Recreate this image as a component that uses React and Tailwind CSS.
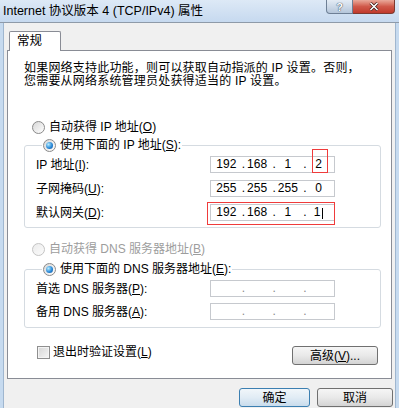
import React from 'react';

const FONT = "font-['Liberation_Sans','Noto_Sans_CJK_SC',sans-serif]";

function Radio({ checked, disabled }) {
  return (
    <span
      className={`inline-flex h-[13px] w-[13px] shrink-0 items-center justify-center rounded-full border bg-linear-to-br ${
        disabled ? 'border-[#c4c4c4] from-[#ececec] to-[#fbfbfb]' : 'border-[#8a8a8a] from-[#d8d8d8] to-[#ffffff]'
      }`}
    >
      {checked && (
        <span className="h-[7px] w-[7px] rounded-full bg-[radial-gradient(circle_at_35%_35%,#b6ecff,#2b8ad8_55%,#0b4f9c)]" />
      )}
    </span>
  );
}

function IpBox({ parts, cursor }) {
  return (
    <div className="grid h-[17px] w-[125px] grid-cols-4 border border-[#c6c9ce] bg-white text-[12px] leading-[15px] text-black">
      {[0, 1, 2, 3].map((i) => (
        <div key={i} className="relative text-center">
          {i > 0 && <span className={`absolute left-0 top-0 ${parts ? 'text-black' : 'text-[#8a8a8a]'}`}>.</span>}
          {parts ? parts[i] : ''}
          {cursor && i === 3 && <span className="ml-[2px] inline-block h-[11px] w-px translate-y-[1px] bg-black align-middle" />}
        </div>
      ))}
    </div>
  );
}

function Key({ k }) {
  return (
    <>
      (<span className="underline">{k}</span>)
    </>
  );
}

function Row({ label, children }) {
  return (
    <div className="grid h-[17px] grid-cols-[174px_125px] items-center">
      <span className="leading-[14px]">{label}</span>
      {children}
    </div>
  );
}

function Button({ children, primary, className = '' }) {
  return (
    <div
      className={`flex h-[19px] items-center justify-center rounded-[3px] border text-[12px] leading-[14px] ${
        primary
          ? 'border-[#3c7fb1] bg-linear-to-b from-[#f1f6fa] via-[#e1ecf5] to-[#c9dcec]'
          : 'border-[#707070] bg-linear-to-b from-[#f6f6f6] via-[#e9e9e9] to-[#d4d4d4]'
      } ${className}`}
    >
      {children}
    </div>
  );
}

export default function App() {
  return (
    <div className={`relative flex h-[408px] w-[399px] flex-col overflow-hidden bg-[#f0f0f0] text-[12px] text-black ${FONT}`}>
      {/* title bar */}
      <div className="flex h-[23px] shrink-0 items-start justify-between border-b border-[#8e9aa8] bg-linear-to-b from-[#dde9f6] to-[#c6d9ef]">
        <div className="pl-[3px] pt-[4px] text-[12.5px] leading-[15px]">Internet 协议版本 4 (TCP/IPv4) 属性</div>
        <div className="mr-[4px] flex">
          <div className="flex h-[14px] w-[27px] items-center justify-center rounded-bl-[4px] border border-t-0 border-[#6d7f95] bg-linear-to-b from-[#e4ecf5] to-[#b5c6da] text-[11px] font-bold leading-[12px] text-white [text-shadow:0_0_1px_#30435a,0_0_1px_#30435a]">
            ?
          </div>
          <div className="flex h-[14px] w-[42px] items-center justify-center rounded-br-[4px] border border-l-0 border-t-0 border-[#7d3a30] bg-linear-to-b from-[#e9a99b] via-[#d0594a] to-[#c0392b]">
            <svg width="10" height="9" viewBox="0 0 10 9">
              <path d="M1.5 1 L8.5 8 M8.5 1 L1.5 8" stroke="#3a1a16" strokeWidth="3" />
              <path d="M1.5 1 L8.5 8 M8.5 1 L1.5 8" stroke="#ffffff" strokeWidth="1.6" />
            </svg>
          </div>
        </div>
      </div>

      <div className="flex flex-1">
        <div className="w-[4px] border-r border-[#9fb6cf] bg-[#c6daef]" />
        <div className="flex flex-1 flex-col pl-[3px] pr-[3px]">
          {/* tab */}
          <div className="relative z-10 ml-[2px] mt-[8px] -mb-px flex h-[20px] w-[52px] items-start rounded-t-[2px] border border-b-0 border-[#898c95] bg-white pl-[7px] pt-[2px] text-[12.5px] leading-[15px]">
            常规
          </div>

          {/* panel */}
          <div className="flex h-[329px] flex-col border border-[#898c95] bg-white pl-[16px] pr-[10px] pt-[11px]">
            <p className="leading-[13px] tracking-[0.2px]">
              如果网络支持此功能，则可以获取自动指派的 IP 设置。否则，
              <br />
              您需要从网络系统管理员处获得适当的 IP 设置。
            </p>

            <div className="ml-[8px] mt-[32px] flex h-[14px] items-center gap-[4px] leading-[14px]">
              <Radio />
              <span>自动获得 IP 地址<Key k="O" /></span>
            </div>

            <fieldset className="mt-[4px] rounded-[3px] border border-[#d5dbe1] pb-[6px] pl-[11px]">
              <legend className="ml-[6px] flex h-[14px] items-center gap-[4px] px-[1px] leading-[14px]">
                <Radio checked />
                <span>使用下面的 IP 地址<Key k="S" />:</span>
              </legend>
              <div className="flex flex-col gap-[7px] pt-[4px]">
                <Row label={<>IP 地址<Key k="I" />:</>}>
                  <IpBox parts={['192', '168', '1', '2']} />
                </Row>
                <Row label={<>子网掩码<Key k="U" />:</>}>
                  <IpBox parts={['255', '255', '255', '0']} />
                </Row>
                <Row label={<>默认网关<Key k="D" />:</>}>
                  <IpBox parts={['192', '168', '1', '1']} cursor />
                </Row>
              </div>
            </fieldset>

            <div className="ml-[8px] mt-[14px] flex h-[14px] items-center gap-[4px] leading-[14px] text-[#9d9d9d]">
              <Radio disabled />
              <span>自动获得 DNS 服务器地址<Key k="B" /></span>
            </div>

            <fieldset className="mt-[6px] rounded-[3px] border border-[#d5dbe1] pb-[7px] pl-[11px]">
              <legend className="ml-[6px] flex h-[14px] items-center gap-[4px] px-[1px] leading-[14px]">
                <Radio checked />
                <span>使用下面的 DNS 服务器地址<Key k="E" />:</span>
              </legend>
              <div className="flex flex-col gap-[6px] pt-[4px]">
                <Row label={<>首选 DNS 服务器<Key k="P" />:</>}>
                  <IpBox />
                </Row>
                <Row label={<>备用 DNS 服务器<Key k="A" />:</>}>
                  <IpBox />
                </Row>
              </div>
            </fieldset>

            <div className="mt-[18px] flex items-start justify-between">
              <div className="ml-[13px] flex items-center gap-[3px] leading-[13px]">
                <span className="h-[13px] w-[13px] border border-[#8f8f8f] bg-linear-to-br from-[#d6d6d6] to-[#f6f6f6] shadow-[inset_0_0_0_1px_#f4f4f4]" />
                <span>退出时验证设置<Key k="L" /></span>
              </div>
              <Button className="mr-[3px] w-[86px]">高级<Key k="V" />...</Button>
            </div>
          </div>

          {/* bottom buttons */}
          <div className="-mr-[1px] mt-[9px] flex justify-end gap-[7px]">
            <Button primary className="w-[71px]">确定</Button>
            <Button className="w-[76px]">取消</Button>
          </div>
        </div>
        <div className="w-[4px] border-l border-[#9fb6cf] bg-[#c6daef]" />
      </div>

      {/* red annotation boxes */}
      <div className="pointer-events-none absolute left-[312px] top-[149px] h-[24px] w-[16px] border border-[#ef3b3b]" />
      <div className="pointer-events-none absolute left-[207px] top-[202px] h-[23px] w-[128px] border border-[#ef3b3b]" />
    </div>
  );
}
